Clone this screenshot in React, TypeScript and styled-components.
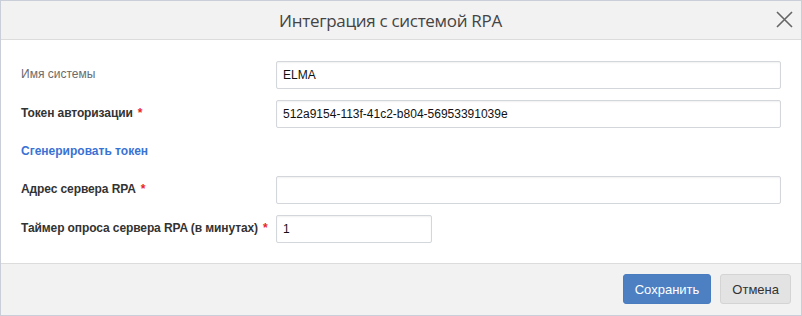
import styled, { createGlobalStyle } from 'styled-components';

const GlobalStyle = createGlobalStyle`
  html, body {
    margin: 0;
    padding: 0;
    background: #ffffff;
  }
  * {
    box-sizing: border-box;
  }
`;

interface Field {
    label: string;
    value: string;
    required?: boolean;
    muted?: boolean;
    short?: boolean;
}

const fields: Field[] = [
    { label: 'Имя системы', value: 'ELMA', muted: true },
    { label: 'Токен авторизации', value: '512a9154-113f-41c2-b804-56953391039e', required: true },
];

const serverFields: Field[] = [
    { label: 'Адрес сервера RPA', value: '', required: true },
    { label: 'Таймер опроса сервера RPA (в минутах)', value: '1', required: true, short: true },
];

export default function App() {
    const renderField = (f: Field) => (
        <Row key={f.label}>
            <Label $muted={f.muted}>
                {f.label}
                {f.required && <Required>*</Required>}
            </Label>
            <Input $short={f.short} defaultValue={f.value} />
        </Row>
    );

    return (
        <>
            <GlobalStyle />
            <Dialog>
                <Header>
                    <Title>Интеграция с системой RPA</Title>
                    <CloseButton aria-label="Закрыть">
                        <svg width="17" height="17" viewBox="0 0 17 17">
                            <path d="M1 1L16 16M16 1L1 16" stroke="#666" strokeWidth="1.6" fill="none" />
                        </svg>
                    </CloseButton>
                </Header>
                <Body>
                    {fields.map(renderField)}
                    <LinkRow>
                        <GenerateLink href="#">Сгенерировать токен</GenerateLink>
                    </LinkRow>
                    {serverFields.map(renderField)}
                </Body>
                <Footer>
                    <Button $primary>Сохранить</Button>
                    <Button>Отмена</Button>
                </Footer>
            </Dialog>
        </>
    );
}

const Dialog = styled.div`
  width: 802px;
  height: 316px;
  border: 1px solid #c9ced8;
  display: flex;
  flex-direction: column;
  background: #fff;
  font-family: "Liberation Sans", Arial, sans-serif;
`;

const Header = styled.div`
  height: 39px;
  flex-shrink: 0;
  background: #f2f2f2;
  border-bottom: 1px solid #dcdcdc;
  display: flex;
  align-items: center;
`;

const Title = styled.div`
  flex: 1;
  text-align: center;
  padding-left: 4px;
  font-family: "Open Sans", sans-serif;
  font-size: 17px;
  color: #444;
  letter-spacing: -0.3px;
`;

const CloseButton = styled.button`
  width: 17px;
  height: 17px;
  margin-right: 8px;
  margin-bottom: 1px;
  padding: 0;
  border: none;
  background: none;
  display: flex;
  cursor: pointer;
`;

const Body = styled.div`
  flex: 1;
  padding: 21px 20px 0 20px;
  display: grid;
  grid-template-columns: 255px 1fr;
  grid-template-rows: 28px 28px 26px 28px 28px;
  row-gap: 11px;
  align-content: start;
`;

const Row = styled.div`
  display: contents;
`;

const Label = styled.div<{ $muted?: boolean }>`
  align-self: center;
  font-size: 12px;
  font-weight: ${p => (p.$muted ? 'normal' : 'bold')};
  color: ${p => (p.$muted ? '#6b6b6b' : '#333')};
  letter-spacing: ${p => (p.$muted ? '0' : '-0.1px')};
  padding-bottom: 2px;
`;

const Required = styled.span`
  color: #e8262b;
  margin-left: 5px;
`;

const Input = styled.input<{ $short?: boolean }>`
  width: ${p => (p.$short ? '156px' : '100%')};
  height: 28px;
  border: 1px solid #d3d6db;
  border-radius: 2px;
  box-shadow: inset 0 1px 2px rgba(0, 0, 0, 0.06);
  padding: 0 6px;
  font-family: "Liberation Sans", Arial, sans-serif;
  font-size: 12px;
  color: #111;
  outline: none;
`;

const LinkRow = styled.div`
  grid-column: 1 / -1;
  display: flex;
  align-items: center;
`;

const GenerateLink = styled.a`
  font-size: 12px;
  font-weight: bold;
  color: #3a72d4;
  text-decoration: none;
  padding-bottom: 2px;
`;

const Footer = styled.div`
  height: 52px;
  flex-shrink: 0;
  background: #f2f2f2;
  border-top: 1px solid #dcdcdc;
  display: flex;
  justify-content: flex-end;
  align-items: flex-start;
  gap: 9px;
  padding: 10px 10px 0 0;
`;

const Button = styled.button<{ $primary?: boolean }>`
  height: 30px;
  padding: 0 ${p => (p.$primary ? '11px' : '11px')};
  border-radius: 3px;
  border: 1px solid ${p => (p.$primary ? '#4a7dc0' : '#d4d4d4')};
  background: ${p => (p.$primary ? '#4d80c2' : '#e3e3e3')};
  color: ${p => (p.$primary ? '#fff' : '#333')};
  font-family: "Liberation Sans", Arial, sans-serif;
  font-size: 13px;
  cursor: pointer;
`;
